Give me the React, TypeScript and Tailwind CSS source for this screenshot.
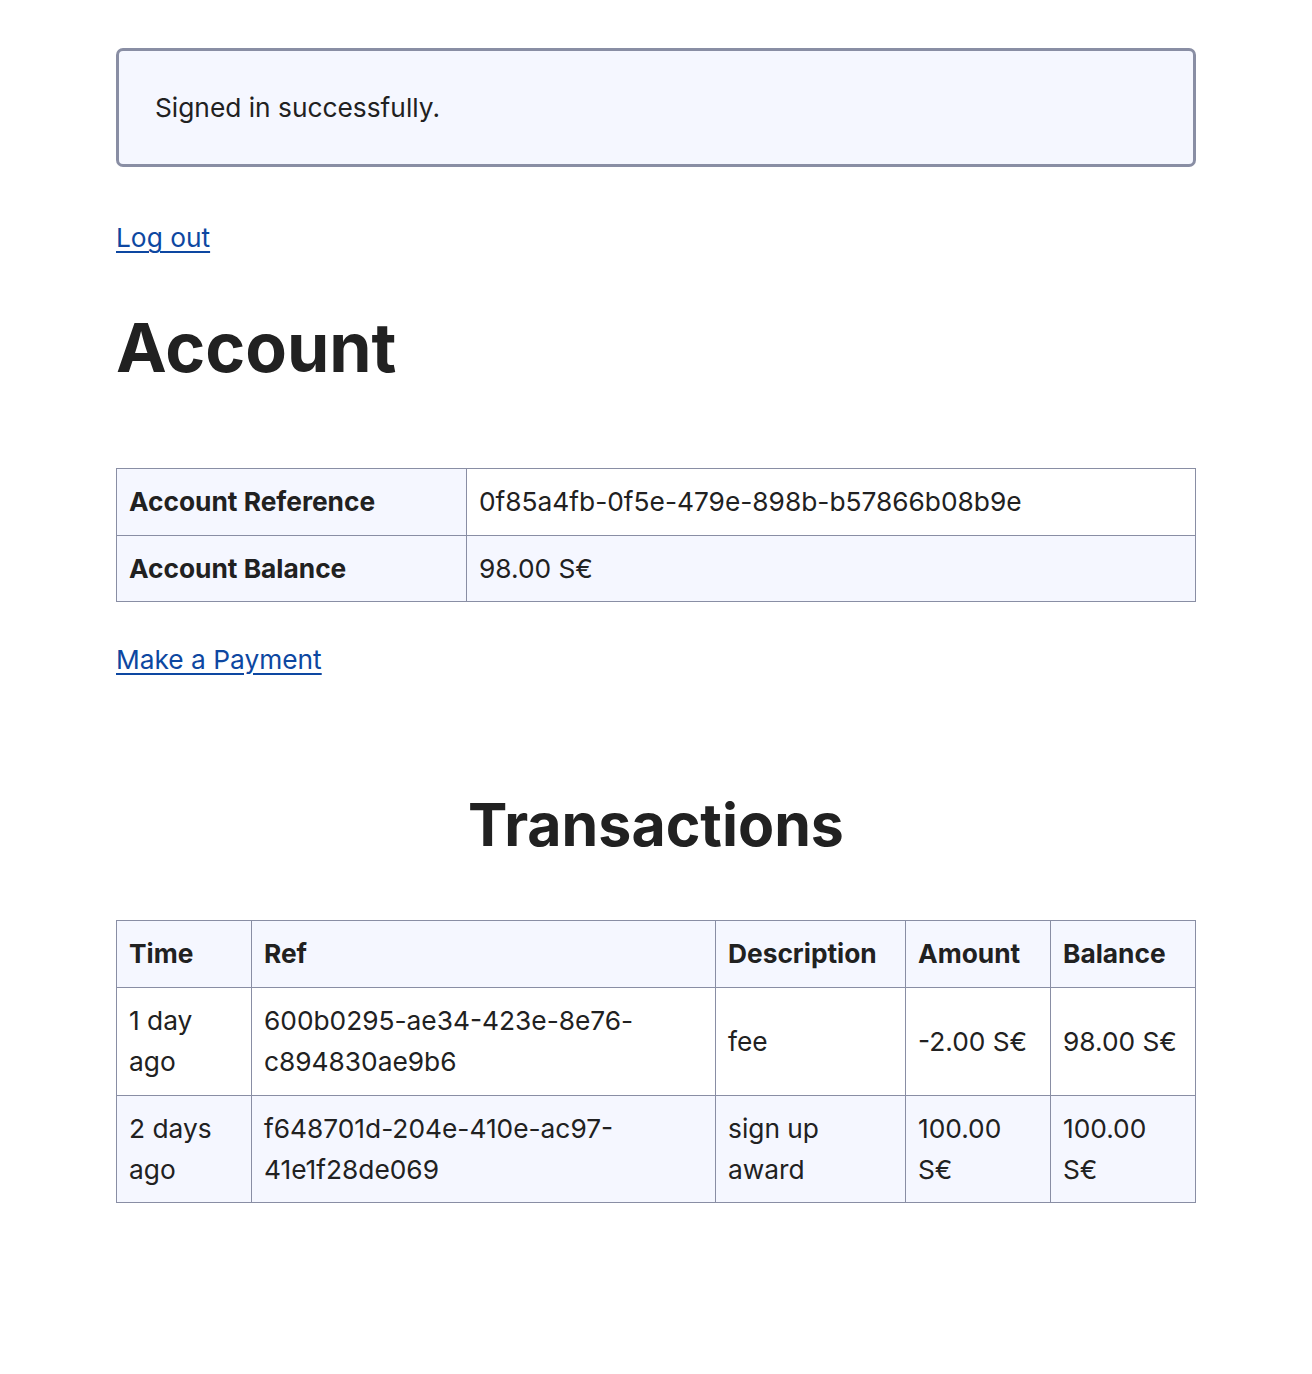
import React from "react";

const th = "border border-[#898EA4] bg-[#f5f7ff] px-[12px] py-[12px] text-left font-bold align-middle";
const td = "border border-[#898EA4] px-[12px] py-[12px] text-left align-middle";

export default function App() {
  return (
    <div
      className="min-h-[1374px] bg-white text-[#212121]"
      style={{ fontFamily: "Inter, 'Noto Sans', sans-serif" }}
    >
      <div className="mx-auto w-[1080px] pt-[48px] text-[26.3px] leading-[41.4px]">
        <div className="rounded-[7px] border-[3px] border-[#898EA4] bg-[#f5f7ff] px-[36px] py-[36px]">
          Signed in successfully.
        </div>

        <p className="mt-[50px]">
          <a href="#" className="text-[#0d47a1] underline decoration-[1.5px] underline-offset-[4px]">
            Log out
          </a>
        </p>

        <h1 className="mt-[45px] text-[68px] font-bold leading-[86.4px]">Account</h1>

        <table className="mt-[78px] w-full border-collapse table-fixed">
          <colgroup>
            <col className="w-[350px]" />
            <col />
          </colgroup>
          <tbody>
            <tr>
              <th className={th}>Account Reference</th>
              <td className={td}>0f85a4fb-0f5e-479e-898b-b57866b08b9e</td>
            </tr>
            <tr>
              <th className={th}>Account Balance</th>
              <td className={td + " bg-[#f5f7ff]"}>98.00 S€</td>
            </tr>
          </tbody>
        </table>

        <p className="mt-[37px]">
          <a href="#" className="text-[#0d47a1] underline decoration-[1.5px] underline-offset-[4px]">
            Make a Payment
          </a>
        </p>

        <h2 className="mt-[107px] text-center text-[59px] font-bold leading-[75px]">Transactions</h2>

        <table className="mt-[58px] w-full border-collapse table-fixed">
          <colgroup>
            <col className="w-[135px]" />
            <col className="w-[464px]" />
            <col className="w-[190px]" />
            <col className="w-[145px]" />
            <col />
          </colgroup>
          <thead>
            <tr>
              <th className={th}>Time</th>
              <th className={th}>Ref</th>
              <th className={th}>Description</th>
              <th className={th}>Amount</th>
              <th className={th}>Balance</th>
            </tr>
          </thead>
          <tbody>
            <tr>
              <td className={td}>1 day ago</td>
              <td className={td}>600b0295-ae34-423e-8e76-c894830ae9b6</td>
              <td className={td}>fee</td>
              <td className={td}>-2.00 S€</td>
              <td className={td}>98.00 S€</td>
            </tr>
            <tr className="bg-[#f5f7ff]">
              <td className={td}>2 days ago</td>
              <td className={td}>f648701d-204e-410e-ac97-41e1f28de069</td>
              <td className={td}>sign up award</td>
              <td className={td}>100.00 S€</td>
              <td className={td}>100.00 S€</td>
            </tr>
          </tbody>
        </table>
      </div>
    </div>
  );
}
